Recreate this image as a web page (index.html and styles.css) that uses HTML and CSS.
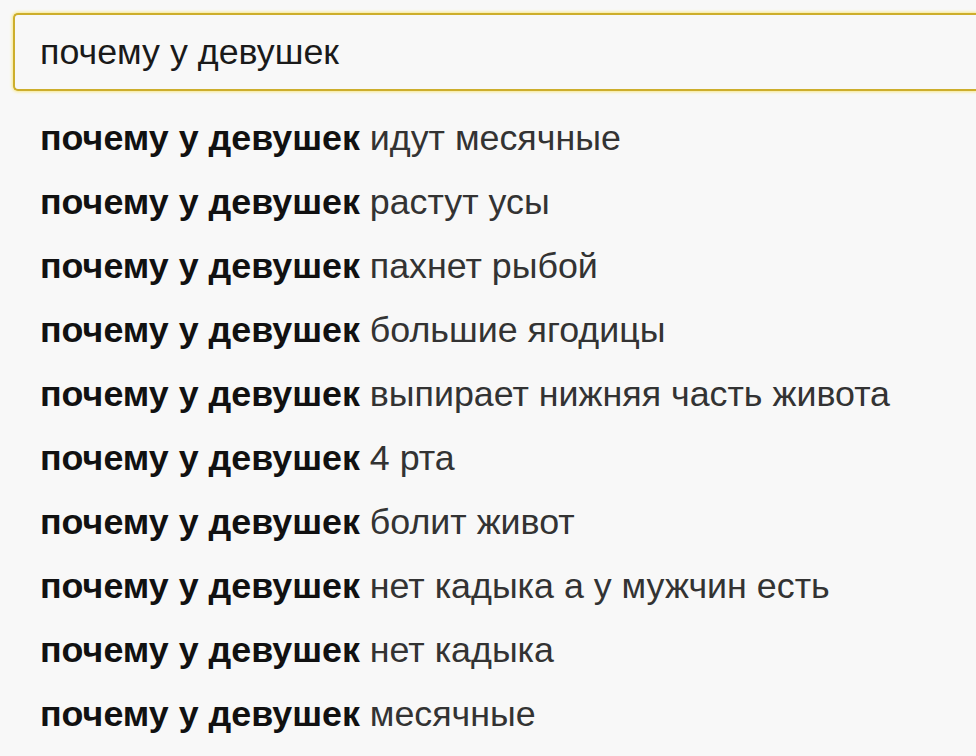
FILE: index.html
```html
<!DOCTYPE html>
<html lang="ru">
<head>
<meta charset="utf-8">
<link rel="stylesheet" href="styles.css">
</head>
<body>
<div class="search">
  <div class="search-box">почему у девушек</div>
</div>
<ul class="suggest">
  <li><b>почему у девушек</b> идут месячные</li>
  <li><b>почему у девушек</b> растут усы</li>
  <li><b>почему у девушек</b> пахнет рыбой</li>
  <li><b>почему у девушек</b> большие ягодицы</li>
  <li><b>почему у девушек</b> выпирает нижняя часть живота</li>
  <li><b>почему у девушек</b> 4 рта</li>
  <li><b>почему у девушек</b> болит живот</li>
  <li><b>почему у девушек</b> нет кадыка а у мужчин есть</li>
  <li><b>почему у девушек</b> нет кадыка</li>
  <li><b>почему у девушек</b> месячные</li>
</ul>
</body>
</html>
```
FILE: styles.css
```css
html, body {
  margin: 0;
  padding: 0;
  background: #f8f8f8;
  overflow: hidden;
}
body {
  font-family: "Liberation Sans", Arial, sans-serif;
  color: #222;
  width: 976px;
  height: 756px;
}
.search {
  padding: 13px 0 0 13px;
}
.search-box {
  box-sizing: border-box;
  height: 78px;
  border: 2px solid #cdae2c;
  border-right: none;
  border-radius: 5px 0 0 5px;
  box-shadow: 0 0 3px 1px #f7e88c;
  background: #f8f8f8;
  padding-left: 25px;
  display: flex;
  align-items: center;
  font-size: 35.8px;
  color: #1a1a1a;
}
.suggest {
  list-style: none;
  margin: 15px 0 0 0;
  padding: 0 0 0 40px;
}
.suggest li {
  height: 64px;
  line-height: 64px;
  font-size: 35.8px;
  color: #333;
  white-space: nowrap;
}
.suggest b {
  color: #111;
  font-weight: bold;
}
```
